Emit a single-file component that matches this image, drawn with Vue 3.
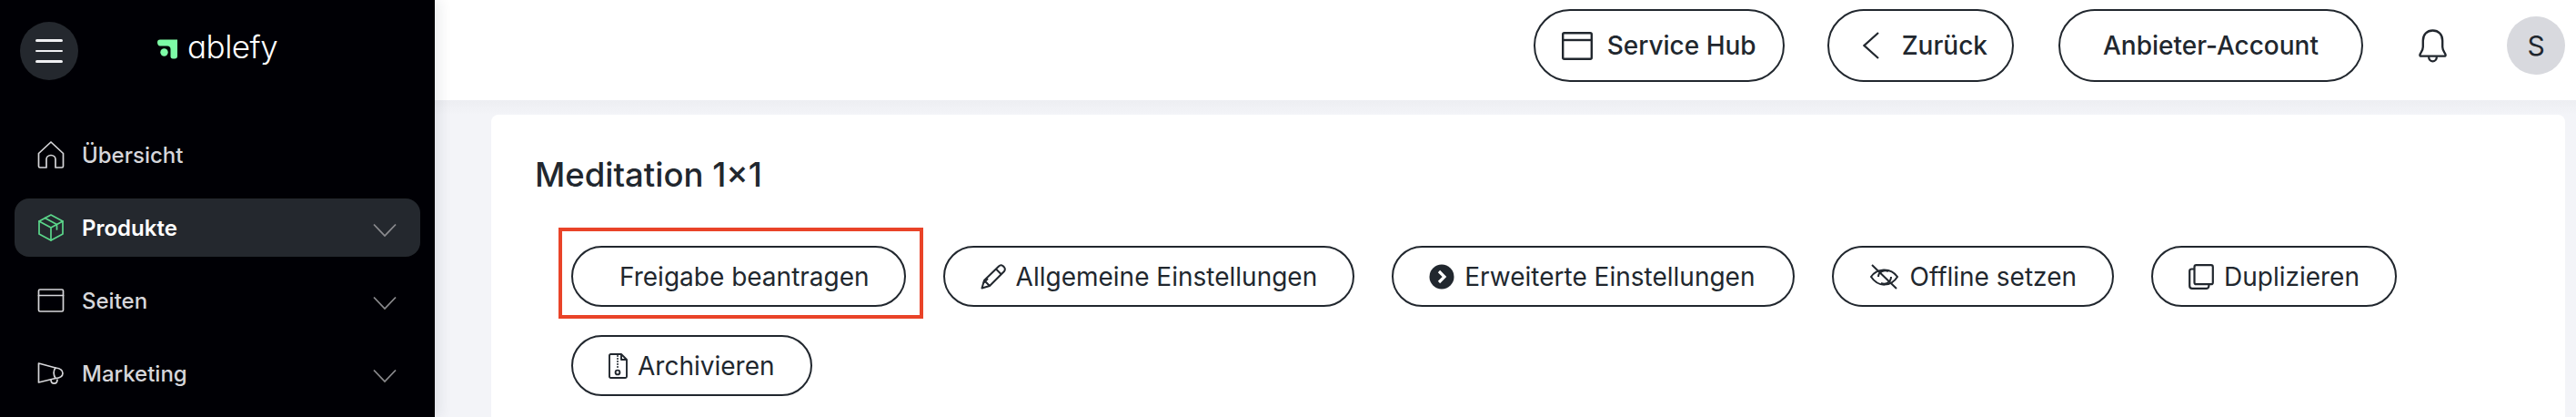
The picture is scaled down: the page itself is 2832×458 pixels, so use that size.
<script setup>
const navItems = [
  { label: 'Übersicht', icon: 'home' },
  { label: 'Produkte', icon: 'box', active: true, arrow: true },
  { label: 'Seiten', icon: 'window', arrow: true },
  { label: 'Marketing', icon: 'megaphone', arrow: true }
]
</script>

<template>
  <div class="page">
    <aside class="sidebar">
      <div class="brand">
        <button class="burger">
          <span></span>
          <span></span>
          <span></span>
        </button>
        <div class="logo">
          <svg class="logo-mark" viewBox="0 0 22 22">
            <path d="M0 3.5 C0 1.5 1 .5 3 .5 H22 V18.5 C22 20.5 21 21.5 19 21.5 H17 C15.5 21.5 14.5 20.5 14.5 19 V11 C14.5 8.8 13.2 7.5 11 7.5 H3 C1 7.5 0 5.5 0 3.5 Z" fill="#7dfba6" />
            <circle cx="7.5" cy="14.5" r="4.2" fill="#7dfba6" />
          </svg>
          <span class="logo-text">ablefy</span>
        </div>
      </div>
      <nav class="nav">
        <a v-for="item in navItems" :key="item.label" class="nav-item" :class="{ active: item.active }">
          <svg class="nav-icon" viewBox="0 0 30 30" fill="none" stroke="currentColor" stroke-width="1.7" stroke-linejoin="round" stroke-linecap="round">
            <template v-if="item.icon === 'home'">
              <path d="M1.5 13.5 L15 1 L28.5 13.5 V27.5 C28.5 28.5 28 29 27 29 H20 V20 C20 17.5 18 15.5 15 15.5 C12 15.5 10 17.5 10 20 V29 H3 C2 29 1.5 28.5 1.5 27.5 Z" />
            </template>
            <template v-if="item.icon === 'box'">
              <path d="M15 1 L28 8 V22 L15 29 L2 22 V8 Z" />
              <path d="M2 8 L15 15 L28 8 M15 15 V29 M8.5 4.5 L21.5 11.5 V17" />
            </template>
            <template v-if="item.icon === 'window'">
              <rect x="1.5" y="3" width="27" height="24" rx="1.5" />
              <path d="M1.5 9.5 H28.5" />
            </template>
            <template v-if="item.icon === 'megaphone'">
              <path d="M1.5 4 L20 9 C25 9.5 28 12 28 15 C28 18 25 20.5 20 20.5 L1.5 25 Z" />
              <path d="M20 9 C17.5 12 17.5 17 20 20.5 M15 22 C15 27.5 22 27.5 22 22" />
            </template>
          </svg>
          <span class="nav-label">{{ item.label }}</span>
          <svg v-if="item.arrow" class="nav-arrow" viewBox="0 0 26 16" fill="none" stroke="currentColor" stroke-width="1.8">
            <path d="M1 1.5 L13 14 L25 1.5" />
          </svg>
        </a>
      </nav>
    </aside>

    <div class="main">
      <header class="topbar">
        <button class="pill top-pill service">
          <svg class="window-icon" viewBox="0 0 34 31" fill="none" stroke="currentColor" stroke-width="2.4">
            <rect x="1.2" y="1.2" width="31.6" height="28.6" rx="1.5" />
            <path d="M1 9 H33" />
          </svg>
          <span>Service Hub</span>
        </button>
        <button class="pill top-pill back">
          <svg class="back-icon" viewBox="0 0 18 30" fill="none" stroke="currentColor" stroke-width="2.2">
            <path d="M17 1 L1.5 15 L17 29" />
          </svg>
          <span>Zurück</span>
        </button>
        <button class="pill top-pill account">Anbieter-Account</button>
        <svg class="bell" viewBox="0 0 32 38" fill="none" stroke="currentColor" stroke-width="2.4" stroke-linejoin="round">
          <path d="M1.5 29 C1.5 27 5 25 5 20 V13 C5 6 9.5 1.5 16 1.5 C22.5 1.5 27 6 27 13 V20 C27 25 30.5 27 30.5 29 C30.5 30 30 30.5 29 30.5 H3 C2 30.5 1.5 30 1.5 29 Z" />
          <path d="M11.5 31 C11.5 38 20.5 38 20.5 31" />
        </svg>
        <div class="avatar">S</div>
      </header>

      <section class="content">
        <div class="card">
          <h1 class="title">Meditation 1×1</h1>
          <div class="actions">
            <div class="highlighted">
              <button class="pill action first">Freigabe beantragen</button>
              <div class="marker"></div>
            </div>
            <button class="pill action">
              <svg class="action-icon" viewBox="0 0 28 28" fill="none" stroke="currentColor" stroke-width="2" stroke-linejoin="round">
                <path d="M1.5 26.5 L4 18 L20 2.5 C21.5 1 23 1 24.5 2 L26 3.5 C27.2 5 27 6.5 26 8 L10 24 Z" />
                <path d="M4 18 L10 24 M17 5.5 L23 11.5 M3 21 L8 16" />
              </svg>
              <span>Allgemeine Einstellungen</span>
            </button>
            <button class="pill action extended">
              <svg class="action-icon" viewBox="0 0 28 28">
                <circle cx="14" cy="14" r="13.5" fill="currentColor" />
                <path d="M11 8 L17 14 L11 20" fill="none" stroke="#fff" stroke-width="3.2" />
              </svg>
              <span>Erweiterte Einstellungen</span>
            </button>
            <button class="pill action">
              <svg class="eye-icon" viewBox="0 0 33 28" fill="none" stroke="currentColor" stroke-width="2">
                <path d="M2 14 C8 5 23 3 31 14 C24 25 10 26 2 14 Z" />
                <path d="M10 14 C10 8 17 6 21 8 M13 21 C18 23 24 20 24 14 M3 1 L30 27" />
              </svg>
              <span>Offline setzen</span>
            </button>
            <button class="pill action">
              <svg class="action-icon" viewBox="0 0 28 28" fill="none" stroke="currentColor" stroke-width="2.2" stroke-linejoin="round">
                <rect x="6.5" y="1.2" width="20.3" height="21" rx="2" />
                <path d="M6.5 5.5 H3.5 C2 5.5 1.2 6.5 1.2 7.5 V24 C1.2 25.8 2.5 26.8 4 26.8 H20 C21.5 26.8 22.5 25.5 22.5 22.2" />
              </svg>
              <span>Duplizieren</span>
            </button>
            <button class="pill action">
              <svg class="zip-icon" viewBox="0 0 21 28" fill="none" stroke="currentColor" stroke-width="1.9" stroke-linejoin="round">
                <path d="M1 2.5 C1 1.5 1.5 1 2.5 1 H14 L20 7 V25.5 C20 26.5 19.5 27 18.5 27 H2.5 C1.5 27 1 26.5 1 25.5 Z" />
                <path d="M14 1 V7 H20" />
                <path d="M9 3 H11 M9 6 H11 M9 9 H11 M9 12 H11 M9 15 H11" stroke-width="1.3" />
                <circle cx="10" cy="21" r="2.4" />
              </svg>
              <span>Archivieren</span>
            </button>
          </div>
        </div>
      </section>
    </div>
  </div>
</template>

<style>
html,
body {
  margin: 0;
  background: #f3f4f8;
}
</style>

<style scoped>
.page {
  display: flex;
  height: 458px;
  overflow: hidden;
  font-family: Inter, "Liberation Sans", sans-serif;
  color: #21272e;
}
.sidebar {
  flex: 0 0 478px;
  background: #000005;
  box-shadow: 4px 0 14px rgba(30, 35, 60, 0.1);
  position: relative;
  z-index: 2;
}
.brand {
  display: flex;
  align-items: center;
  height: 64px;
  padding: 24px 0 0 22px;
}
.burger {
  display: flex;
  flex-direction: column;
  justify-content: center;
  gap: 9px;
  width: 64px;
  height: 64px;
  padding: 0 17px;
  border: 0;
  border-radius: 50%;
  background: #24282e;
}
.burger span {
  display: block;
  height: 2.5px;
  border-radius: 2px;
  background: #f0f0f2;
}
.logo {
  display: flex;
  align-items: center;
  gap: 11px;
  margin: -10px 0 0 87px;
}
.logo-mark {
  width: 22px;
  height: 22px;
  margin-top: 6px;
}
.logo-text {
  color: #fff;
  font-size: 35px;
  font-weight: 300;
  line-height: 40px;
  letter-spacing: -0.5px;
  font-feature-settings: "cv11";
}
.nav {
  display: flex;
  flex-direction: column;
  gap: 16px;
  margin-top: 50px;
  padding: 0 16px;
}
.nav-item {
  display: flex;
  align-items: center;
  height: 64px;
  padding: 0 26px 0 25px;
  border-radius: 16px;
  color: #d6d6da;
  font-size: 24px;
  font-weight: 500;
}
.nav-item.active {
  background: #24282e;
  color: #fff;
  font-weight: 600;
}
.nav-item.active .nav-icon {
  color: #5bd68a;
}
.nav-icon {
  width: 30px;
  height: 30px;
  margin-right: 19px;
}
.nav-label {
  flex: 1;
}
.nav-arrow {
  width: 26px;
  height: 16px;
  margin-top: 6px;
  color: #8a8a8e;
}
.main {
  flex: 1;
  min-width: 0;
}
.topbar {
  display: flex;
  align-items: center;
  justify-content: flex-end;
  box-sizing: border-box;
  height: 110px;
  padding: 0 12px 10px 0;
  background: #fff;
}
.pill {
  display: flex;
  align-items: center;
  justify-content: center;
  flex: none;
  box-sizing: border-box;
  border: 2px solid #21272e;
  border-radius: 40px;
  background: #fff;
  color: #21272e;
  font-family: inherit;
  font-weight: 400;
  white-space: nowrap;
}
.top-pill {
  height: 80px;
  font-size: 28px;
  font-weight: 500;
}
.service {
  padding: 0 29px;
  gap: 16px;
}
.back {
  padding: 0 27px 0 37px;
  gap: 25px;
  margin-left: 47px;
}
.account {
  padding: 0 47px;
  margin-left: 49px;
}
.window-icon {
  width: 34px;
  height: 31px;
}
.back-icon {
  width: 18px;
  height: 30px;
}
.bell {
  width: 33px;
  height: 37px;
  margin-left: 60px;
}
.avatar {
  display: flex;
  align-items: center;
  justify-content: center;
  width: 64px;
  height: 64px;
  margin-left: 65px;
  border-radius: 50%;
  background: #d8d9de;
  font-size: 30px;
}
.content {
  height: 348px;
  padding: 16px 12px 0 62px;
  box-sizing: border-box;
  background: linear-gradient(#edeef2, #f3f4f8 16px);
}
.card {
  height: 100%;
  padding: 44px 0 0 48px;
  border-radius: 8px 8px 0 0;
  background: #fff;
}
.title {
  margin: 0;
  font-size: 36.5px;
  font-weight: 500;
  line-height: 44px;
}
.actions {
  display: flex;
  flex-wrap: wrap;
  gap: 31px 41px;
  margin: 56px 0 0 40px;
}
.highlighted {
  position: relative;
}
.marker {
  position: absolute;
  inset: -20px -19px -13px -14px;
  border: 4px solid #e94328;
}
.action {
  height: 67px;
  padding: 0 39px;
  gap: 11px;
  font-size: 28px;
}
.first {
  padding: 0 38px 0 51px;
}
.extended {
  padding-right: 42px;
}
.action-icon {
  width: 28px;
  height: 28px;
}
.eye-icon {
  width: 33px;
  height: 28px;
}
.zip-icon {
  width: 21px;
  height: 28px;
}
</style>
